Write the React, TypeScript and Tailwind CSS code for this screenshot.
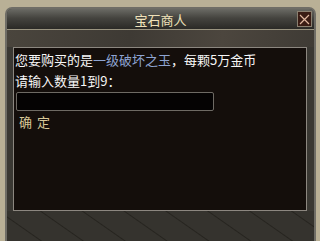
import React from 'react'

const font = { fontFamily: '"Noto Sans CJK SC", "Noto Sans", sans-serif' }

export default function App() {
  return (
    <div
      className="w-[320px] h-[241px] overflow-hidden bg-[#b9b096] pt-[7px] pl-[5px]"
      style={font}
    >
      <div className="w-[311px] h-[240px] rounded-t-[7px] border-2 border-[#6f6d66] bg-[#3a3833] flex flex-col overflow-hidden">
        {/* Title bar */}
        <div className="relative h-[21px] shrink-0 flex items-center justify-center bg-[linear-gradient(to_bottom,#6a6a64,#45443f_45%,#2a2926)] border-b border-[#9a9480]">
          <span className="text-[13px] leading-none text-[#f0e2ba]">宝石商人</span>
          <div className="absolute right-[2px] top-[2px] w-[15px] h-[16px] border border-[#8a8070] bg-[#3a1c14] flex items-center justify-center">
            <svg width="11" height="11" viewBox="0 0 11 11">
              <path d="M1 1 L10 10 M10 1 L1 10" stroke="#e0b8a0" strokeWidth="1.2" />
            </svg>
          </div>
        </div>

        {/* Strip above panel */}
        <div className="h-[17px] shrink-0 bg-[linear-gradient(100deg,#4a453d,#3e3a34_40%,#4c463e_70%,#3f3b35)]" />

        {/* Content panel */}
        <div className="ml-[6px] w-[294px] h-[164px] shrink-0 border border-[#8c8780] bg-[#140e0b] pt-[1px] pl-[1px] text-[13px] text-[#f7f7f7]">
          <div className="leading-[21px] whitespace-nowrap">
            您要购买的是<span className="text-[#8ea4d2]">一级破坏之玉</span>，每颗5万金币
          </div>
          <div className="leading-[21px] whitespace-nowrap">请输入数量1到9：</div>
          <div className="mt-[1px] ml-[1px] w-[198px] h-[19px] rounded-[2px] border border-[#6e6a64] bg-[#050303]" />
          <div className="mt-[1px] ml-[4px] leading-[20px] text-[#d8c898] tracking-[5px]">确定</div>
        </div>

        {/* Bottom texture */}
        <div className="flex-1 bg-[repeating-linear-gradient(35deg,#35332e_0px,#35332e_22px,#26241f_23px,#35332e_24px),linear-gradient(#3a3833,#33312c)]" />
      </div>
    </div>
  )
}
